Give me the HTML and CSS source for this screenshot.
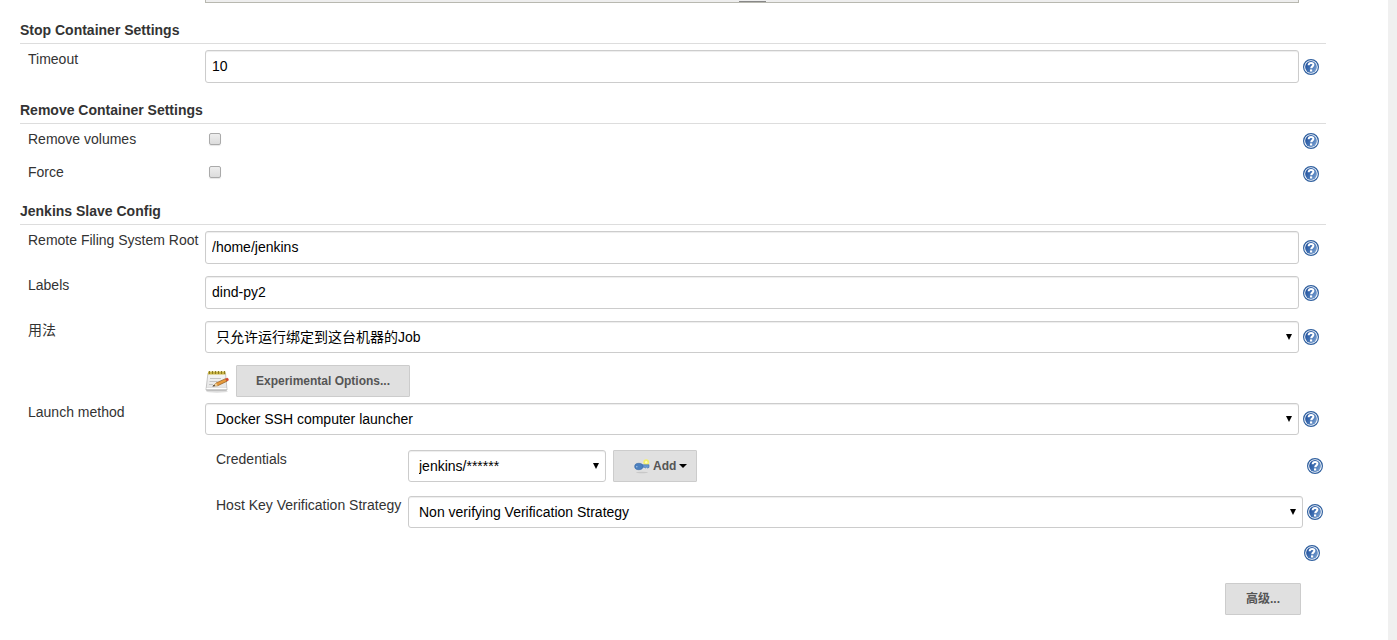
FILE: index.html
```html
<!DOCTYPE html>
<html lang="zh-CN">
<head>
<meta charset="utf-8">
<title>Docker Template Config</title>
<link rel="stylesheet" href="styles.css">
</head>
<body>
<svg class="defs" aria-hidden="true">
  <defs>
    <linearGradient id="blue" x1="0" y1="0.2" x2="1" y2="0.8">
      <stop offset="0" stop-color="#1f4f9c"/><stop offset="0.5" stop-color="#4272b4"/><stop offset="1" stop-color="#7ea3d2"/>
    </linearGradient>
    <linearGradient id="paper" x1="0" y1="0" x2="0" y2="1">
      <stop offset="0" stop-color="#f6f6f6"/><stop offset="0.8" stop-color="#e6e6e6"/><stop offset="1" stop-color="#c4c4c4"/>
    </linearGradient>
    <symbol id="help" viewBox="0 0 16 16">
      <circle cx="8" cy="8" r="7.4" fill="#fff" stroke="#30609f" stroke-width="1.2"/>
      <circle cx="8" cy="8" r="5.9" fill="url(#blue)"/>
      <path d="M5.600 6.300C5.700 4.500 6.700 3.900 8.100 3.900c1.400 0 2.300.7 2.300 1.900 0 1.500-2.200 1.700-2.200 3.500" fill="none" stroke="#fff" stroke-width="2"/>
      <rect x="7" y="10.400" width="2.200" height="2.100" fill="#fff"/>
    </symbol>
  </defs>
</svg>
<main class="page">
  <form class="form">
    <div class="editor-end"><span class="grip"></span></div>

    <h2 class="heading">Stop Container Settings</h2>
    <div class="row">
      <label class="label" for="timeout">Timeout</label>
      <input class="field" id="timeout" type="text" value="10">
      <a class="help" href="#" aria-label="Help"><svg class="help-icon"><use href="#help"/></svg></a>
    </div>

    <h2 class="heading">Remove Container Settings</h2>
    <div class="row row-check">
      <label class="label" for="volumes">Remove volumes</label>
      <div><input class="check" id="volumes" type="checkbox"></div>
      <a class="help" href="#" aria-label="Help"><svg class="help-icon"><use href="#help"/></svg></a>
    </div>
    <div class="row row-check">
      <label class="label" for="force">Force</label>
      <div><input class="check" id="force" type="checkbox"></div>
      <a class="help" href="#" aria-label="Help"><svg class="help-icon"><use href="#help"/></svg></a>
    </div>

    <h2 class="heading">Jenkins Slave Config</h2>
    <div class="row">
      <label class="label" for="root">Remote Filing System Root</label>
      <input class="field" id="root" type="text" value="/home/jenkins">
      <a class="help" href="#" aria-label="Help"><svg class="help-icon"><use href="#help"/></svg></a>
    </div>
    <div class="row">
      <label class="label" for="labels">Labels</label>
      <input class="field" id="labels" type="text" value="dind-py2">
      <a class="help" href="#" aria-label="Help"><svg class="help-icon"><use href="#help"/></svg></a>
    </div>
    <div class="row">
      <label class="label" for="usage">用法</label>
      <div class="picker"><select class="field select" id="usage"><option>只允许运行绑定到这台机器的Job</option></select></div>
      <a class="help" href="#" aria-label="Help"><svg class="help-icon"><use href="#help"/></svg></a>
    </div>
    <div class="row row-options">
      <span></span>
      <div class="group">
        <svg class="notepad" viewBox="0 0 24 24" aria-hidden="true">
          <ellipse cx="12" cy="22.500" rx="11" ry="1.200" fill="#ddd"/>
          <path d="M3 4h17.500l1.500 16.500q0 1-1 1H2q-1 0-1-1z" fill="url(#paper)" stroke="#b9b9b9" stroke-width=".8"/>
          <path d="M1.400 19.500h20.200" stroke="#fff"/>
          <path d="M3 2.500h17.500v3H3z" fill="#c9b544"/>
          <path d="M4.500 2v3M7.500 2v3M10.500 2v3M13.500 2v3M16.500 2v3M19.500 2v3" stroke="#8d7a20"/>
          <path d="M5 9.500h11M4.500 12.500h8M4 15.500h4" stroke="#c4c4c4"/>
          <path d="M8 17l3-3 9.500-4.300 1.600 2.500-9.400 4.500z" fill="#e79a3c" stroke="#8f5a23" stroke-width=".7"/>
          <path d="M20.300 9.700l2-1q1.500.7 1.500 2.500l-1.800 1z" fill="#d4452f"/>
          <path d="M8 17l3-3 1.700 2.700z" fill="#edd3a0"/>
          <path d="M7.200 17.500l2-1.800.9 1.400z" fill="#333"/>
        </svg>
        <button class="button experimental" type="button">Experimental Options...</button>
      </div>
    </div>
    <div class="row">
      <label class="label" for="launch">Launch method</label>
      <div class="picker"><select class="field select" id="launch"><option>Docker SSH computer launcher</option></select></div>
      <a class="help" href="#" aria-label="Help"><svg class="help-icon"><use href="#help"/></svg></a>
    </div>

    <div class="nested">
      <div class="row">
        <label class="label" for="credentials">Credentials</label>
        <div class="group">
          <div class="picker credentials"><select class="field select" id="credentials"><option>jenkins/******</option></select></div>
          <button class="button add" type="button">
            <svg class="key" viewBox="0 0 16 16" aria-hidden="true">
              <ellipse cx="8" cy="14.500" rx="6" ry=".8" fill="#c8c8c8"/>
              <circle cx="12.200" cy="4.200" r="2.900" fill="#f5f06c"/>
              <path d="M7.500 6.800H15v2.600l-1.500.6-1-.8-1.300.8-1-.8H7.500z" fill="#6b9bd0" stroke="#3c6fae" stroke-width=".6"/>
              <ellipse cx="4.800" cy="8.500" rx="4.100" ry="3.200" fill="#4b80bf" stroke="#3567a5" stroke-width=".6"/>
              <circle cx="2.800" cy="8.700" r=".7" fill="#a9c6e7"/>
              <circle cx="12.200" cy="4.200" r="1.200" fill="#fffdb8"/>
            </svg>
            <span>Add</span>
            <svg class="caret" viewBox="0 0 8 4" aria-hidden="true"><path d="M0 0h8L4 4z"/></svg>
          </button>
        </div>
        <a class="help" href="#" aria-label="Help"><svg class="help-icon"><use href="#help"/></svg></a>
      </div>
      <div class="row">
        <label class="label" for="hostkey">Host Key Verification Strategy</label>
        <div class="picker"><select class="field select" id="hostkey"><option>Non verifying Verification Strategy</option></select></div>
        <a class="help" href="#" aria-label="Help"><svg class="help-icon"><use href="#help"/></svg></a>
      </div>
    </div>
    <div class="extra"><a class="help" href="#" aria-label="Help"><svg class="help-icon"><use href="#help"/></svg></a></div>
    <div class="actions"><button class="button advanced" type="button">高级...</button></div>
  </form>
</main>
</body>
</html>
```
FILE: styles.css
```css
* { box-sizing: border-box; }
body {
  margin: 0;
  background: #fff;
  color: #333;
  font: 14px/18px "Liberation Sans", "Noto Sans CJK SC", sans-serif;
}
.defs { position: absolute; width: 0; height: 0; }
.page {
  min-height: 100vh;
  padding: 0 62px 0 20px;
  border-right: 9px solid #f0f0f0;
}
.editor-end {
  display: flex;
  justify-content: center;
  height: 3px;
  margin: 0 27px 6px 185px;
  border: 1px solid #b8b8b0;
  border-top: 0;
  background: #eee;
}
.grip { width: 27px; height: 2px; border-bottom: 1px solid #888; }
.heading {
  margin: 0;
  padding: 12px 0 4px;
  border-bottom: 1px solid #ddd;
  font-size: 14px;
  font-weight: bold;
  line-height: 18px;
}
.row {
  display: grid;
  grid-template-columns: 185px 1fr 27px;
  align-items: center;
  padding: 6px 0;
}
.label { align-self: start; padding-left: 8px; white-space: nowrap; }
.row-check { min-height: 33px; }
.row-options { padding-bottom: 0; }
.help { display: block; height: 16px; padding-left: 4px; }
.help-icon { display: block; width: 16px; height: 16px; }
.field {
  display: block;
  width: 100%;
  height: 33px;
  margin: 0;
  padding: 5px 6px 7px;
  border: 1px solid #ccc;
  border-radius: 3px;
  background: #fff;
  box-shadow: inset 0 1px 1px rgba(0, 0, 0, 0.075);
  color: #000;
  font: inherit;
}
.picker { position: relative; }
.picker::after {
  content: "";
  position: absolute;
  top: 13px;
  right: 7px;
  border: 3px solid transparent;
  border-top: 6px solid #000;
  border-bottom: 0;
  pointer-events: none;
}
.select { height: 32px; padding: 0 10px; appearance: none; }
.check {
  display: block;
  width: 12px;
  height: 12px;
  margin: 0 0 4px 4px;
  appearance: none;
  border: 1px solid #aaa;
  border-radius: 2px;
  background: linear-gradient(#eee, #dcdcdc);
  box-shadow: 0 1px 1px rgba(0, 0, 0, 0.1);
}
.group { display: flex; align-items: center; gap: 7px; }
.notepad { width: 24px; height: 24px; }
.button {
  display: flex;
  align-items: center;
  justify-content: center;
  height: 32px;
  padding: 0 16px;
  border: 1px solid #ccc;
  border-radius: 1px;
  background: #e0e0e0;
  color: #555;
  font: bold 12px/16px "Liberation Sans", "Noto Sans CJK SC", sans-serif;
  white-space: nowrap;
}
.nested { padding: 3px 0 0 188px; }
.nested .row { grid-template-columns: 200px 1fr 23px; }
.nested .row + .row { margin-top: 2px; }
.credentials { width: 198px; }
.add { gap: 3px; padding: 0 9px 0 20px; }
.key { width: 16px; height: 16px; }
.caret { width: 8px; height: 4px; }
.extra { display: flex; justify-content: flex-end; padding: 11px 6px 16px 0; }
.actions { display: flex; justify-content: flex-end; padding: 6px 25px 24px 0; }
.experimental { width: 174px; }
.advanced { width: 76px; }
```
